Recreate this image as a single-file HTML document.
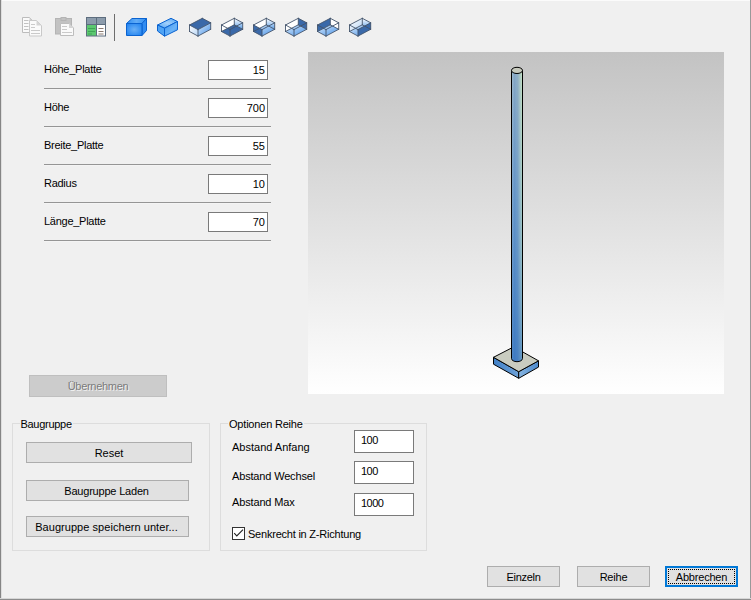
<!DOCTYPE html>
<html lang="de">
<head>
<meta charset="utf-8">
<title>Baugruppe</title>
<style>
html,body{margin:0;padding:0;}
body{width:751px;height:600px;overflow:hidden;background:#f0f0f0;position:relative;
  font-family:"Liberation Sans",Arial,sans-serif;font-size:11px;color:#000;}
.abs{position:absolute;}
.lbl{position:absolute;white-space:nowrap;line-height:14px;height:14px;}
.sep{position:absolute;left:44px;width:227px;height:1px;background:#959595;border-bottom:1px solid #f4f4f4;}
.tb{position:absolute;box-sizing:border-box;background:#fff;border:1px solid #7a7a7a;white-space:nowrap;}
.tb.r{left:208px;width:60px;height:20px;text-align:right;padding-right:2px;line-height:18px;}
.tb.l{left:354px;width:60px;height:23px;text-align:left;padding-left:6px;line-height:19px;letter-spacing:-0.5px;}
.btn{position:absolute;box-sizing:border-box;background:#e1e1e1;border:1px solid #adadad;text-align:center;white-space:nowrap;}
.grp{position:absolute;box-sizing:border-box;border:1px solid #dddddd;}
.gl{position:absolute;background:#f0f0f0;white-space:nowrap;line-height:14px;height:14px;padding:0 1px;}
</style>
</head>
<body>
<!-- window edges -->
<div class="abs" style="left:0;top:0;width:751px;height:1px;background:#fbfbfb;"></div>
<div class="abs" style="left:0;top:0;width:1px;height:600px;background:#858585;"></div>
<div class="abs" style="left:1px;top:0;width:1px;height:600px;background:#dedede;"></div>
<div class="abs" style="left:750px;top:0;width:1px;height:600px;background:#999999;"></div>
<div class="abs" style="left:0;top:599px;width:751px;height:1px;background:#8c8c8c;"></div>
<div class="abs" style="left:0;top:598px;width:751px;height:1px;background:#d6d6d6;"></div>

<!-- toolbar -->
<svg class="abs" style="left:0;top:0" width="400" height="50" viewBox="0 0 400 50">
  <defs>
    <linearGradient id="gb" x1="0" y1="0" x2="1" y2="1">
      <stop offset="0" stop-color="#1c84f2"/><stop offset="0.55" stop-color="#5aa6f4"/><stop offset="1" stop-color="#1c7eea"/>
    </linearGradient>
    <linearGradient id="gl" x1="0" y1="0" x2="0" y2="1">
      <stop offset="0" stop-color="#ffffff"/><stop offset="1" stop-color="#5a9ee8"/>
    </linearGradient>
    <linearGradient id="gl2" x1="0" y1="0" x2="1" y2="1">
      <stop offset="0" stop-color="#dcecfc"/><stop offset="1" stop-color="#4590e6"/>
    </linearGradient>
    <linearGradient id="gw" x1="0" y1="0" x2="1" y2="1">
      <stop offset="0" stop-color="#ffffff"/><stop offset="1" stop-color="#b8d6f6"/>
    </linearGradient>
    <radialGradient id="gr1" cx="0.5" cy="0.5" r="0.7">
      <stop offset="0" stop-color="#6ab0f6"/><stop offset="1" stop-color="#1a7ff0"/>
    </radialGradient>
    <linearGradient id="gt1" x1="0" y1="0" x2="1" y2="0">
      <stop offset="0" stop-color="#2f8ef2"/><stop offset="0.5" stop-color="#62acf6"/><stop offset="1" stop-color="#2f8ef2"/>
    </linearGradient>
    <radialGradient id="gt2" cx="0.5" cy="0.5" r="0.6">
      <stop offset="0" stop-color="#a6d2fb"/><stop offset="1" stop-color="#58a8f5"/>
    </radialGradient>
    <linearGradient id="gs2" x1="0" y1="0" x2="1" y2="1">
      <stop offset="0" stop-color="#3a93f2"/><stop offset="0.6" stop-color="#6cb4f7"/><stop offset="1" stop-color="#3a93f2"/>
    </linearGradient>
  </defs>
  <!-- copy (disabled) -->
  <g fill="#fafafa" stroke="#bcbcbc" stroke-width="1">
    <path d="M22.500 17.500h7l3.500 3.500v11.500h-10.500z"/>
    <path d="M29.500 17.500v3.500h3.500z" fill="#cfcfcf" stroke="none"/>
    <path d="M29.500 20.500h7l5 5v10.500h-12z" stroke="#c9c9c9"/>
    <path d="M36.500 20.500v5h5z" fill="#d4d4d4" stroke="none"/>
  </g>
  <g stroke="#c2c2c2" stroke-width="1">
    <path d="M24 20.500h4.500M24 23.500h4.500M24 26.500h4.500M24 29.500h4.500"/>
    <path d="M31 24.500h4M31 27.500h4M31 30.500h9M31 33.500h9" stroke="#cacaca"/>
  </g>
  <!-- paste (disabled) -->
  <g stroke="#b4b4b4" stroke-width="1">
    <rect x="55.500" y="18.500" width="16" height="15.500" fill="#c2c2c2"/>
    <rect x="61" y="17.500" width="5" height="3" fill="#c2c2c2"/>
    <path d="M60.500 23.500h8.500l4.500 4.500v7.500h-13z" fill="#fafafa" stroke="#bdbdbd"/>
    <path d="M69 23.500v4.500h4.500z" fill="#d4d4d4" stroke="none"/>
  </g>
  <g stroke="#cacaca"><path d="M62 26.500h5M62 29.500h5M62 32.500h10"/></g>
  <!-- table -->
  <g>
    <rect x="86" y="17" width="20" height="19.500" fill="#5d6d7e"/>
    <rect x="87" y="18" width="9" height="6" fill="#8c9cac"/>
    <rect x="97" y="18" width="8" height="6" fill="#8c9cac"/>
    <rect x="87" y="25" width="9" height="10.500" fill="#5cc870"/>
    <rect x="97" y="25" width="8" height="10.500" fill="#ffffff"/>
    <path d="M88 28.500h7M88 31.500h7M88 34h4" stroke="#3fa555" stroke-width="1"/>
    <path d="M98.500 28.500h5M98.500 31.500h5M98.500 34h5" stroke="#8a7a70" stroke-width="1"/>
  </g>
  <!-- separator -->
  <rect x="114" y="14" width="1" height="27" fill="#6d6d6d"/>
  <!-- cube 1 -->
  <g stroke="#0b63d0" stroke-width="1" stroke-linejoin="round">
    <path d="M126.500 23.500L132 18.500H146.500L142 23.500Z" fill="url(#gt1)"/>
    <path d="M142 23.500L146.500 18.500V30.500L142 35.500Z" fill="#318cf1"/>
    <rect x="126.500" y="23.500" width="15.500" height="12" fill="url(#gr1)"/>
  </g>
  <!-- cube 2 -->
  <g stroke="#0b63d0" stroke-width="1" stroke-linejoin="round">
    <path d="M157.500 25L171 18.300L177.500 21.500L164.500 28.200Z" fill="url(#gt2)"/>
    <path d="M157.500 25L164.500 28.200V36.200L157.500 31Z" fill="#4fa3f4"/>
    <path d="M164.500 28.200L177.500 21.500V29.800L164.500 36.200Z" fill="url(#gs2)"/>
  </g>
  <!-- cubes 3-8 -->
  <g>
    <polygon points="189.5,25.0 198.0,29.6 198.0,36.1 189.5,31.5" fill="url(#gw)"/>
    <polygon points="198.0,29.6 210.7,22.8 210.7,29.3 198.0,36.1" fill="url(#gl2)"/>
    <polygon points="189.5,25.0 202.3,18.3 210.7,22.8 198.0,29.6" fill="#3a69a9"/>
    <path d="M189.5 25.0L202.3 18.3M202.3 18.3L210.7 22.8M210.7 22.8L198.0 29.6M198.0 29.6L189.5 25.0M189.5 31.5L198.0 36.1M198.0 36.1L210.7 29.3M189.5 25.0L189.5 31.5M198.0 29.6L198.0 36.1M210.7 22.8L210.7 29.3" fill="none" stroke="#43536b" stroke-width="0.9" stroke-linecap="round"/>
  </g>
  <g>
    <polygon points="221.5,25.0 234.3,18.3 234.3,24.8 221.5,31.5" fill="#ffffff"/>
    <polygon points="234.3,18.3 242.7,22.8 242.7,29.3 234.3,24.8" fill="url(#gl)"/>
    <polygon points="221.5,31.5 234.3,24.8 242.7,29.3 230.0,36.1" fill="#3a69a9"/>
    <path d="M221.5 25.0L234.3 18.3M234.3 18.3L242.7 22.8M242.7 22.8L230.0 29.6M230.0 29.6L221.5 25.0M221.5 31.5L230.0 36.1M230.0 36.1L242.7 29.3M221.5 25.0L221.5 31.5M230.0 29.6L230.0 36.1M242.7 22.8L242.7 29.3M221.5 31.5L234.3 24.8M234.3 24.8L242.7 29.3M234.3 18.3L234.3 24.8" fill="none" stroke="#43536b" stroke-width="0.9" stroke-linecap="round"/>
  </g>
  <g>
    <polygon points="253.5,25.0 266.3,18.3 266.3,24.8 253.5,31.5" fill="#ffffff"/>
    <polygon points="266.3,18.3 274.7,22.8 274.7,29.3 266.3,24.8" fill="url(#gl)"/>
    <polygon points="253.5,31.5 266.3,24.8 274.7,29.3 262.0,36.1" fill="url(#gl2)"/>
    <polygon points="253.5,25.0 262.0,29.6 262.0,36.1 253.5,31.5" fill="#3a69a9"/>
    <path d="M253.5 25.0L266.3 18.3M266.3 18.3L274.7 22.8M274.7 22.8L262.0 29.6M262.0 29.6L253.5 25.0M253.5 31.5L262.0 36.1M262.0 36.1L274.7 29.3M253.5 25.0L253.5 31.5M262.0 29.6L262.0 36.1M274.7 22.8L274.7 29.3M253.5 31.5L266.3 24.8M266.3 24.8L274.7 29.3M266.3 18.3L266.3 24.8" fill="none" stroke="#43536b" stroke-width="0.9" stroke-linecap="round"/>
  </g>
  <g>
    <polygon points="285.5,25.0 298.3,18.3 298.3,24.8 285.5,31.5" fill="#ffffff"/>
    <polygon points="285.5,31.5 298.3,24.8 306.7,29.3 294.0,36.1" fill="url(#gl2)"/>
    <polygon points="298.3,18.3 306.7,22.8 306.7,29.3 298.3,24.8" fill="#3a69a9"/>
    <path d="M285.5 25.0L298.3 18.3M298.3 18.3L306.7 22.8M306.7 22.8L294.0 29.6M294.0 29.6L285.5 25.0M285.5 31.5L294.0 36.1M294.0 36.1L306.7 29.3M285.5 25.0L285.5 31.5M294.0 29.6L294.0 36.1M306.7 22.8L306.7 29.3M285.5 31.5L298.3 24.8M298.3 24.8L306.7 29.3M298.3 18.3L298.3 24.8" fill="none" stroke="#43536b" stroke-width="0.9" stroke-linecap="round"/>
  </g>
  <g>
    <polygon points="330.3,18.3 338.7,22.8 338.7,29.3 330.3,24.8" fill="#ffffff"/>
    <polygon points="317.5,31.5 330.3,24.8 338.7,29.3 326.0,36.1" fill="url(#gl2)"/>
    <polygon points="317.5,25.0 330.3,18.3 330.3,24.8 317.5,31.5" fill="#3a69a9"/>
    <path d="M317.5 25.0L330.3 18.3M330.3 18.3L338.7 22.8M338.7 22.8L326.0 29.6M326.0 29.6L317.5 25.0M317.5 31.5L326.0 36.1M326.0 36.1L338.7 29.3M317.5 25.0L317.5 31.5M326.0 29.6L326.0 36.1M338.7 22.8L338.7 29.3M317.5 31.5L330.3 24.8M330.3 24.8L338.7 29.3M330.3 18.3L330.3 24.8" fill="none" stroke="#43536b" stroke-width="0.9" stroke-linecap="round"/>
  </g>
  <g>
    <polygon points="349.5,25.0 362.3,18.3 362.3,24.8 349.5,31.5" fill="url(#gw)"/>
    <polygon points="362.3,18.3 370.7,22.8 370.7,29.3 362.3,24.8" fill="url(#gl)"/>
    <polygon points="349.5,31.5 362.3,24.8 370.7,29.3 358.0,36.1" fill="url(#gl2)"/>
    <polygon points="358.0,29.6 370.7,22.8 370.7,29.3 358.0,36.1" fill="#3a69a9"/>
    <path d="M349.5 25.0L362.3 18.3M362.3 18.3L370.7 22.8M370.7 22.8L358.0 29.6M358.0 29.6L349.5 25.0M349.5 31.5L358.0 36.1M358.0 36.1L370.7 29.3M349.5 25.0L349.5 31.5M358.0 29.6L358.0 36.1M370.7 22.8L370.7 29.3M349.5 31.5L362.3 24.8M362.3 24.8L370.7 29.3M362.3 18.3L362.3 24.8" fill="none" stroke="#43536b" stroke-width="0.9" stroke-linecap="round"/>
  </g>
</svg>

<!-- parameter list -->
<div class="lbl" style="left:44px;top:62px;letter-spacing:-0.27px;">Höhe_Platte</div>
<div class="tb r" style="top:60px;">15</div>
<div class="sep" style="top:88px;"></div>
<div class="lbl" style="left:44px;top:100px;letter-spacing:-0.27px;">Höhe</div>
<div class="tb r" style="top:98px;">700</div>
<div class="sep" style="top:126px;"></div>
<div class="lbl" style="left:44px;top:138px;letter-spacing:-0.27px;">Breite_Platte</div>
<div class="tb r" style="top:136px;">55</div>
<div class="sep" style="top:164px;"></div>
<div class="lbl" style="left:44px;top:176px;letter-spacing:-0.27px;">Radius</div>
<div class="tb r" style="top:174px;">10</div>
<div class="sep" style="top:202px;"></div>
<div class="lbl" style="left:44px;top:214px;letter-spacing:-0.27px;">Länge_Platte</div>
<div class="tb r" style="top:212px;">70</div>
<div class="sep" style="top:240px;"></div>

<!-- 3D preview -->
<div class="abs" style="left:308px;top:52px;width:416px;height:342px;background:linear-gradient(to bottom,#c3c3c3 0%,#ffffff 100%);"></div>
<svg class="abs" style="left:308px;top:52px" width="416" height="342" viewBox="308 52 416 342">
  <defs>
    <linearGradient id="pv" x1="0" y1="67" x2="0" y2="362" gradientUnits="userSpaceOnUse">
      <stop offset="0" stop-color="#84a6c4"/><stop offset="0.45" stop-color="#6294c8"/><stop offset="1" stop-color="#3d7ac2"/>
    </linearGradient>
    <linearGradient id="ph" x1="511" y1="0" x2="523" y2="0" gradientUnits="userSpaceOnUse">
      <stop offset="0" stop-color="#d8e8d0" stop-opacity="0.35"/><stop offset="0.3" stop-color="#ffffff" stop-opacity="0"/><stop offset="0.55" stop-color="#c8d8c8" stop-opacity="0.2"/><stop offset="0.88" stop-color="#cdeac2" stop-opacity="0.8"/><stop offset="1" stop-color="#e8f4e0" stop-opacity="0.5"/>
    </linearGradient>
    <linearGradient id="pm" x1="0" y1="67" x2="0" y2="362" gradientUnits="userSpaceOnUse">
      <stop offset="0" stop-color="#fff"/><stop offset="0.6" stop-color="#aaa"/><stop offset="1" stop-color="#555"/>
    </linearGradient>
    <mask id="pmask" maskUnits="userSpaceOnUse" x="505" y="60" width="24" height="310"><rect x="505" y="60" width="24" height="310" fill="url(#pm)"/></mask>
    <linearGradient id="sl" x1="493" y1="0" x2="519" y2="0" gradientUnits="userSpaceOnUse">
      <stop offset="0" stop-color="#3f7fc6"/><stop offset="1" stop-color="#6ea2d8"/>
    </linearGradient>
    <linearGradient id="sr" x1="519" y1="0" x2="539" y2="0" gradientUnits="userSpaceOnUse">
      <stop offset="0" stop-color="#86b4e0"/><stop offset="1" stop-color="#4a88cc"/>
    </linearGradient>
  </defs>
  <!-- base plate -->
  <g stroke="#000" stroke-width="1" stroke-linejoin="round">
    <polygon points="493.500,357.300 518.700,371.700 518.700,378.300 493.500,364.200" fill="url(#sl)"/>
    <polygon points="518.700,371.700 538.500,360.800 538.500,367.100 518.700,378.300" fill="url(#sr)"/>
    <polygon points="493.500,357.300 513.700,346.900 538.500,360.800 518.700,371.700" fill="#c9ccc0"/>
  </g>
  <!-- pole -->
  <path d="M511.500 70.300V358.500A5.500 3.200 0 0 0 522.500 358.500V70.300Z" fill="url(#pv)"/>
  <path d="M511.500 70.300V358.500A5.500 3.200 0 0 0 522.500 358.500V70.300Z" fill="url(#ph)" mask="url(#pmask)"/>
  <path d="M511.500 70.300V358.500A5.500 3.200 0 0 0 522.500 358.500V70.300Z" fill="none" stroke="#000" stroke-width="1"/>
  <ellipse cx="517" cy="70.400" rx="5.500" ry="3.100" fill="#c6c9bd" stroke="#000" stroke-width="1"/>
</svg>

<!-- Übernehmen (disabled) -->
<div class="btn" style="left:29px;top:375px;width:138px;height:22px;line-height:20px;background:#cccccc;border-color:#bfbfbf;color:#7b7b7b;letter-spacing:-0.3px;text-shadow:1px 1px 0 rgba(255,255,255,0.75);">Übernehmen</div>

<!-- group Baugruppe -->
<div class="grp" style="left:12px;top:423px;width:198px;height:128px;"></div>
<div class="gl" style="left:19.5px;top:417px;letter-spacing:-0.29px;">Baugruppe</div>
<div class="btn" style="left:26px;top:442px;width:166px;height:21px;line-height:21px;">Reset</div>
<div class="btn" style="left:26px;top:480px;width:163px;height:21px;line-height:21px;letter-spacing:-0.2px;padding-right:2px;">Baugruppe Laden</div>
<div class="btn" style="left:26px;top:516px;width:163px;height:21px;line-height:21px;letter-spacing:0.05px;padding-right:2px;">Baugruppe speichern unter...</div>

<!-- group Optionen Reihe -->
<div class="grp" style="left:220px;top:423px;width:207px;height:128px;"></div>
<div class="gl" style="left:228px;top:417px;letter-spacing:-0.2px;">Optionen Reihe</div>
<div class="lbl" style="left:232px;top:440px;">Abstand Anfang</div>
<div class="tb l" style="top:430px;">100</div>
<div class="lbl" style="left:232px;top:469px;letter-spacing:-0.16px;">Abstand Wechsel</div>
<div class="tb l" style="top:461px;">100</div>
<div class="lbl" style="left:232px;top:495px;letter-spacing:-0.15px;">Abstand Max</div>
<div class="tb l" style="top:493px;">1000</div>
<div class="abs" style="left:232px;top:527px;width:13px;height:13px;box-sizing:border-box;border:1px solid #333;background:#fff;">
  <svg width="11" height="11" viewBox="0 0 11 11" style="display:block"><path d="M1.200 5.200L3.800 7.900L10 1.700" fill="none" stroke="#222" stroke-width="1.100"/></svg>
</div>
<div class="lbl" style="left:248px;top:527px;letter-spacing:-0.22px;">Senkrecht in Z-Richtung</div>

<!-- bottom buttons -->
<div class="btn" style="left:487px;top:566px;width:73px;height:21px;line-height:21px;letter-spacing:-0.28px;">Einzeln</div>
<div class="btn" style="left:577px;top:566px;width:73px;height:21px;line-height:21px;letter-spacing:-0.2px;">Reihe</div>
<div class="btn" style="left:665px;top:566px;width:73px;height:21px;line-height:19px;letter-spacing:-0.2px;border:2px solid #0078d7;">Abbrechen
  <div class="abs" style="left:1px;top:1px;right:1px;bottom:1px;border:1px dotted #000;"></div>
</div>

</body>
</html>
